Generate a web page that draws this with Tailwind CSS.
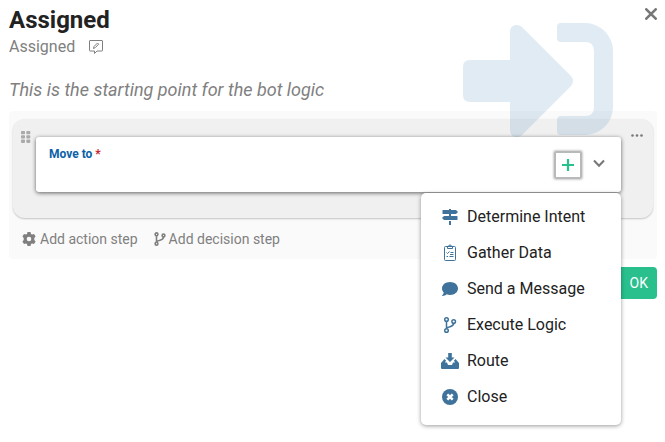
<!DOCTYPE html>
<html lang="en">
<head>
    <meta charset="UTF-8">
    <meta name="viewport" content="width=device-width, initial-scale=1.0">
    <title>Assigned</title>
    <script src="https://cdn.jsdelivr.net/npm/@tailwindcss/browser@4"></script>
</head>
<body class="bg-white font-[Roboto,sans-serif] text-[#222]">
    <main class="relative min-h-screen px-2 pt-1">
        <!-- Watermark -->
        <svg class="pointer-events-none absolute top-[23px] right-[52px] z-10 h-[114px] w-[150px] text-[#2f7cb5]/15" viewBox="0 0 150 114" fill="currentColor" aria-hidden="true">
            <path d="M7 37H47V9C47 2 54 0 59 4L108 53Q112 58 108 63L59 112C54 116 47 114 47 107V79H7Q0 79 0 72V44Q0 37 7 37Z"/>
            <path d="M98 0H122A28 28 0 0 1 150 28V84A28 28 0 0 1 122 112H98Q94 112 94 108V97Q94 93 98 93H122Q131 93 131 84V28Q131 19 122 19H98Q94 19 94 15V4Q94 0 98 0Z"/>
        </svg>

        <!-- Header -->
        <header class="pl-px">
            <div class="flex justify-between">
                <h1 class="text-2xl font-bold">Assigned</h1>
                <button type="button" aria-label="Close dialog" class="mt-1 h-3 w-3 text-[#777]">
                    <svg class="h-3 w-3" viewBox="0 0 12 12" fill="none" stroke="currentColor" stroke-width="2.6" stroke-linecap="round"><path d="M1.3 1.3L10.7 10.7M10.7 1.3L1.3 10.7"/></svg>
                </button>
            </div>
            <div class="flex items-center gap-[14px] text-[#808080]">
                <span class="text-base leading-[22px]">Assigned</span>
                <button type="button" aria-label="Edit name" class="h-[14px] w-[14px]">
                    <svg class="h-[14px] w-[14px]" viewBox="0 0 14 14" fill="none" stroke="currentColor" stroke-linejoin="round"><path d="M.5 1Q.5 .5 1 .5H13Q13.500 .5 13.500 1V10.500Q13.500 11 13 11H8L5.500 13.500V11H1Q.5 11 .5 10.500Z"/><path d="M4.500 8.500L5 6.500L8.500 3L9.700 4.200L6.200 7.700Z"/></svg>
                </button>
            </div>
            <p class="mt-5 text-lg leading-6 text-[#808080] italic">This is the starting point for the bot logic</p>
        </header>

        <!-- Steps -->
        <section class="ml-px mt-[9px] rounded bg-[#fafafa] px-1 pt-2 pb-[9px]">
            <div class="relative h-[99px] rounded-xl bg-[#f0f0f0] px-2 pt-3 shadow-[0_1px_2px_rgba(0,0,0,0.22)]">
                <div class="flex justify-between">
                    <button type="button" aria-label="Drag step" class="h-3 w-[10px] text-[#aaa]">
                        <svg class="h-3 w-[10px]" viewBox="0 0 10 12" fill="currentColor"><rect width="4" height="3.300" rx=".8"/><rect x="5.300" width="4" height="3.300" rx=".8"/><rect y="4.300" width="4" height="3.300" rx=".8"/><rect x="5.300" y="4.300" width="4" height="3.300" rx=".8"/><rect y="8.600" width="4" height="3.300" rx=".8"/><rect x="5.300" y="8.600" width="4" height="3.300" rx=".8"/></svg>
                    </button>
                    <button type="button" aria-label="More options" class="mt-[3px] mr-[2px] h-[3px] w-3 text-[#777]">
                        <svg class="block h-[3px] w-3" viewBox="0 0 12 3" fill="currentColor"><circle cx="1.500" cy="1.500" r="1.300"/><circle cx="6" cy="1.500" r="1.300"/><circle cx="10.500" cy="1.500" r="1.300"/></svg>
                    </button>
                </div>

                <!-- Field with its menu -->
                <div class="absolute top-[18px] right-8 left-[23px] z-20">
                    <div class="flex h-[55px] justify-between rounded-[3px] bg-white pr-4 pl-[13px] shadow-[0_1px_4px_rgba(0,0,0,0.6)]">
                        <div id="moveTo" class="pt-[9px] text-xs leading-4 font-bold text-[#0b61a8]">Move to <span class="text-[#c8232c]">*</span></div>
                        <div class="flex items-center gap-[11px]">
                            <button type="button" aria-label="Add step" class="flex h-7 w-7 items-center justify-center rounded-[2px] border-2 border-[#b9b9bb] text-[#28c08d] shadow-[0_0_2px_1px_rgba(0,0,0,0.2)]">
                                <svg class="h-3 w-3" viewBox="0 0 12 12" fill="none" stroke="currentColor" stroke-width="2.200"><path d="M6 0V12M0 6H12"/></svg>
                            </button>
                            <button type="button" aria-labelledby="moveTo" aria-expanded="true" class="mb-1 h-3 w-3 text-[#777]">
                                <svg class="h-3 w-3" viewBox="0 0 12 12" fill="none" stroke="currentColor" stroke-width="2"><path d="M1 3.500L6 8.700L11 3.500"/></svg>
                            </button>
                        </div>
                    </div>
                    <ul class="absolute top-[56px] right-0 w-[200px] rounded-[5px] bg-white pt-[6px] pb-[10px] text-base shadow-[0_1px_4px_rgba(0,0,0,0.4)]">
                        <li><button type="button" class="flex h-9 w-full items-center gap-2 pl-5">
                            <svg class="h-[18px] w-[18px] text-[#3f739b]" viewBox="0 0 18 18" fill="currentColor"><path d="M8 1H10V2H15L17 4L15 6H2Q1.500 6 1.500 5.500V2.500Q1.500 2 2 2H8ZM3 8H16Q16.500 8 16.500 8.500V11.500Q16.500 12 16 12H3L1 10ZM8 6H10V8H8ZM8 13H10V17H8Z"/></svg>
                            Determine Intent
                        </button></li>
                        <li><button type="button" class="flex h-9 w-full items-center gap-2 pl-5">
                            <svg class="h-[18px] w-[18px] text-[#3f739b]" viewBox="0 0 18 18" fill="none" stroke="currentColor"><rect x="3.500" y="2.500" width="11" height="14" rx="1"/><path d="M6.500 2.500V4.500H11.500V2.500H10.500Q10.500 1 9 1T7.500 2.500Z"/><path d="M5.500 8.500L6.500 9.500L8.500 7.500M9.500 8.500H12.500M9 10.500H12.500M5.500 12.500H7M8.500 12.500H12.500"/></svg>
                            Gather Data
                        </button></li>
                        <li><button type="button" class="flex h-9 w-full items-center gap-2 pl-5">
                            <svg class="h-[18px] w-[18px] text-[#3f739b]" viewBox="0 0 18 18" fill="currentColor"><path d="M9 2C4.500 2 1 4.800 1 8.400C1 10 1.700 11.400 2.800 12.500C2.500 13.800 1.800 14.800 1 15.700C.9 15.900 1 16 1.200 16C3.200 16 4.700 15.200 5.700 14.300C6.700 14.700 7.800 14.900 9 14.900C13.500 14.900 17 12 17 8.400S13.500 2 9 2Z"/></svg>
                            Send a Message
                        </button></li>
                        <li><button type="button" class="flex h-9 w-full items-center gap-2 pl-5">
                            <svg class="h-[18px] w-[18px] text-[#3f739b]" viewBox="0 0 18 18" fill="none" stroke="currentColor" stroke-width="1.500"><circle cx="5.500" cy="3.500" r="1.800"/><circle cx="5.500" cy="14.500" r="1.800"/><circle cx="12.700" cy="5.500" r="1.800"/><path d="M5.500 5.300V12.700M12.700 7.300C12.700 11 9 10 5.500 12"/></svg>
                            Execute Logic
                        </button></li>
                        <li><button type="button" class="flex h-9 w-full items-center gap-2 pl-5">
                            <svg class="h-[18px] w-[18px] text-[#3f739b]" viewBox="0 0 18 18" fill="currentColor"><path d="M7.200 1H10.800V5.500H13.500L9 10L4.500 5.500H7.200Z"/><path d="M3.500 7L5 8.500L4 10.500H6L7 13H11L12 10.500H14L13 8.500L14.500 7L18 11V16Q18 17 17 17H1Q0 17 0 16V11Z"/></svg>
                            Route
                        </button></li>
                        <li><button type="button" class="flex h-9 w-full items-center gap-2 pl-5">
                            <svg class="h-[18px] w-[18px]" viewBox="0 0 18 18" fill="none"><circle cx="9" cy="9" r="8" fill="#3f739b"/><path d="M6.300 6.300L11.700 11.700M11.700 6.300L6.300 11.700" stroke="#fff" stroke-width="2.600"/></svg>
                            Close
                        </button></li>
                    </ul>
                </div>
            </div>

            <div class="mt-[10px] flex gap-4 pl-[9px] text-sm leading-[22px] text-[#808080]">
                <button type="button" class="flex items-center gap-1">
                    <svg class="h-[14px] w-[14px]" viewBox="0 0 14 14" fill="currentColor" fill-rule="evenodd"><path d="M5.500 0H8.500L9 2L10 2.600L12 2L13.600 4.600L12.300 6V8L13.600 9.400L12 12L10 11.400L9 12L8.500 14H5.500L5 12L4 11.400L2 12L.4 9.400L1.700 8V6L.4 4.600L2 2L4 2.600L5 2ZM7 4.700A2.300 2.300 0 1 0 7 9.300A2.300 2.300 0 1 0 7 4.700Z"/></svg>
                    Add action step
                </button>
                <button type="button" class="flex items-center gap-[3px]">
                    <svg class="h-[14px] w-3" viewBox="0 0 12 14" fill="none" stroke="currentColor" stroke-width="1.600"><circle cx="2.500" cy="2.300" r="1.400"/><circle cx="2.500" cy="11.700" r="1.400"/><circle cx="9.500" cy="3.500" r="1.400"/><path d="M2.500 3.700V10.300M9.500 5C9.500 8.500 6 7.500 2.500 9.500"/></svg>
                    Add decision step
                </button>
            </div>
        </section>

        <footer class="mt-2 flex justify-end">
            <button type="button" class="h-8 rounded bg-[#29c08e] pr-[9px] pl-4 text-sm text-white">OK</button>
        </footer>
    </main>
</body>
</html>
